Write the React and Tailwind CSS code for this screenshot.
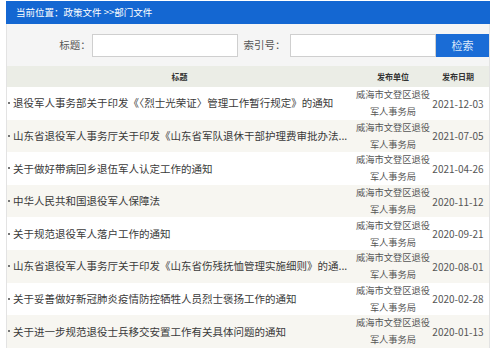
import React from "react";

const rows = [
  { t: "退役军人事务部关于印发《〈烈士光荣证〉管理工作暂行规定》的通知", d: "2021-12-03" },
  { t: "山东省退役军人事务厅关于印发《山东省军队退休干部护理费审批办法...", d: "2021-07-05" },
  { t: "关于做好带病回乡退伍军人认定工作的通知", d: "2021-04-26" },
  { t: "中华人民共和国退役军人保障法", d: "2020-11-12" },
  { t: "关于规范退役军人落户工作的通知", d: "2020-09-21" },
  { t: "山东省退役军人事务厅关于印发《山东省伤残抚恤管理实施细则》的通...", d: "2020-08-01" },
  { t: "关于妥善做好新冠肺炎疫情防控牺牲人员烈士褒扬工作的通知", d: "2020-02-28" },
  { t: "关于进一步规范退役士兵移交安置工作有关具体问题的通知", d: "2020-01-13" },
];

export default function App() {
  return (
    <div
      className="w-[500px] h-[354px] overflow-hidden bg-white"
      style={{ fontFamily: '"Noto Sans CJK SC", "Noto Sans", sans-serif' }}
    >
      <div className="ml-[6px] w-[484px] pt-[1px]">
        <div className="h-[23px] bg-[#1467d2] text-white text-[9.5px] leading-[23px] pl-[10px]">
          当前位置：政策文件 &gt;&gt;部门文件
        </div>
        <div className="border-l border-r border-[#e3e3e3]">
          <div className="h-[42px] bg-[#f5f5f5] flex items-center">
            <div className="w-[84px] text-right text-[10.5px] text-[#555]">标题：</div>
            <div className="ml-[1px] w-[146px] h-[23px] bg-white border border-[#cfcfcf]"></div>
            <div className="w-[48px] text-right text-[10.5px] text-[#555]">索引号：</div>
            <div className="ml-[5px] w-[146px] h-[23px] bg-white border border-[#cfcfcf]"></div>
            <div className="w-[53px] h-[23px] bg-[#1a6cd6] text-[#dce9fa] text-[11px] flex items-center justify-center">
              检索
            </div>
          </div>
          <div className="h-[21px] bg-[#ebede6] flex items-center text-[8px] font-bold text-[#333]">
            <div className="w-[345px] text-center">标题</div>
            <div className="w-[82px] text-center">发布单位</div>
            <div className="w-[48px] text-center">发布日期</div>
          </div>
          {rows.map((r, i) => (
            <div
              key={i}
              className={`h-[32.6px] flex items-center ${i % 2 === 1 ? "bg-[#f7f6f1]" : "bg-white"}`}
            >
              <div className="w-[345px] flex items-center text-[10.5px] text-[#3a3a3a] overflow-hidden whitespace-nowrap">
                <span className="ml-[1px] w-[2px] h-[2px] bg-[#777] shrink-0"></span>
                <span className="ml-[3px] overflow-hidden">{r.t}</span>
              </div>
              <div className="w-[82px] text-center text-[9.25px] leading-[17px] text-[#555] whitespace-nowrap">
                <div>威海市文登区退役</div>
                <div>军人事务局</div>
              </div>
              <div className="w-[48px] text-center text-[10px] text-[#555] whitespace-nowrap flex justify-center">
                {r.d}
              </div>
            </div>
          ))}
        </div>
      </div>
    </div>
  );
}
